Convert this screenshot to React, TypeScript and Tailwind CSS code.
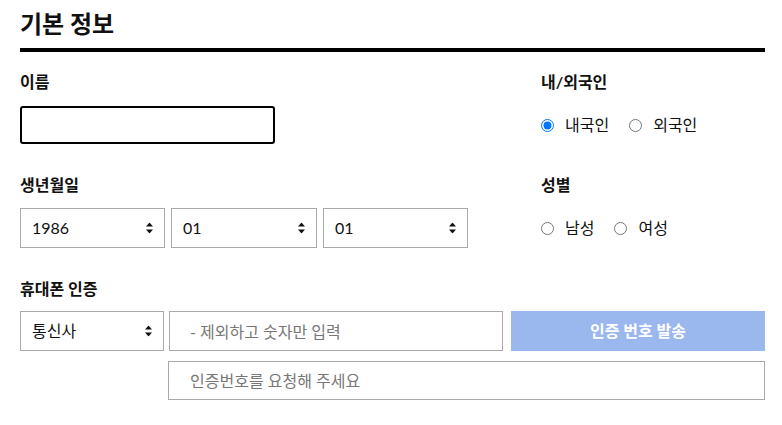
import React from "react";

function SelectArrow() {
  return (
    <svg width="7" height="11" viewBox="0 0 7 11" className="pointer-events-none absolute right-[11px] top-1/2 -translate-y-1/2">
      <path d="M3.5 0L7 4H0z" fill="#111" />
      <path d="M3.5 11L0 7h7z" fill="#111" />
    </svg>
  );
}

function FakeSelect({ value, width }: { value: string; width: string }) {
  return (
    <div className={`relative h-[40px] ${width} border border-[#aaa] bg-white`}>
      <div className="flex h-full items-center pl-[11px] text-[16px] text-[#111]">{value}</div>
      <SelectArrow />
    </div>
  );
}

function Radio({ label, checked, name }: { label: string; checked?: boolean; name: string }) {
  return (
    <label className="flex items-center gap-[11px] text-[16px] text-[#111]">
      <input type="radio" name={name} defaultChecked={checked} className="h-[13px] w-[13px] accent-[#0075ff]" />
      <span>{label}</span>
    </label>
  );
}

function Label({ children }: { children: React.ReactNode }) {
  return <div className="text-[16px] font-bold leading-[20px] text-[#111]">{children}</div>;
}

export default function App() {
  return (
    <div
      className="min-h-screen bg-white"
      style={{ fontFamily: 'Lato, "Noto Sans CJK KR", sans-serif' }}
    >
      <div className="ml-[20px] w-[745px]">
        <h2 className="border-b-4 border-black pb-2 pt-2 text-[24px] font-bold leading-[32px] text-[#111]">
          기본 정보
        </h2>

        {/* 이름 / 내외국인 */}
        <div className="mt-5 flex">
          <div className="w-[521px]">
            <Label>이름</Label>
            <input
              type="text"
              className="mt-[14px] h-[38px] w-[255px] rounded-[3px] border-2 border-black px-2 text-[16px] outline-none"
            />
          </div>
          <div>
            <Label>내/외국인</Label>
            <div className="mt-[14px] flex h-[38px] items-center gap-[20px]">
              <Radio name="nation" label="내국인" checked />
              <Radio name="nation" label="외국인" />
            </div>
          </div>
        </div>

        {/* 생년월일 / 성별 */}
        <div className="mt-[31px] flex">
          <div className="w-[521px]">
            <Label>생년월일</Label>
            <div className="mt-[13px] flex gap-[6px]">
              <FakeSelect value="1986" width="w-[145px]" />
              <FakeSelect value="01" width="w-[146px]" />
              <FakeSelect value="01" width="w-[145px]" />
            </div>
          </div>
          <div>
            <Label>성별</Label>
            <div className="mt-[13px] flex h-[40px] items-center gap-[20px]">
              <Radio name="gender" label="남성" />
              <Radio name="gender" label="여성" />
            </div>
          </div>
        </div>

        {/* 휴대폰 인증 */}
        <div className="mt-[31px]">
          <Label>휴대폰 인증</Label>
          <div className="mt-3 flex">
            <FakeSelect value="통신사" width="w-[144px]" />
            <input
              type="text"
              placeholder="- 제외하고 숫자만 입력"
              className="ml-[5px] h-[40px] w-[334px] border border-[#aaa] pl-[20px] text-[16px] outline-none placeholder:text-[#777]"
            />
            <button className="ml-[8px] h-[40px] w-[254px] bg-[#9ab7ee] text-[16px] font-bold text-white">
              인증 번호 발송
            </button>
          </div>
          <input
            type="text"
            placeholder="인증번호를 요청해 주세요"
            className="ml-[148px] mt-[10px] h-[39px] w-[597px] border border-[#aaa] pl-[21px] text-[16px] outline-none placeholder:text-[#777]"
          />
        </div>
      </div>
    </div>
  );
}
